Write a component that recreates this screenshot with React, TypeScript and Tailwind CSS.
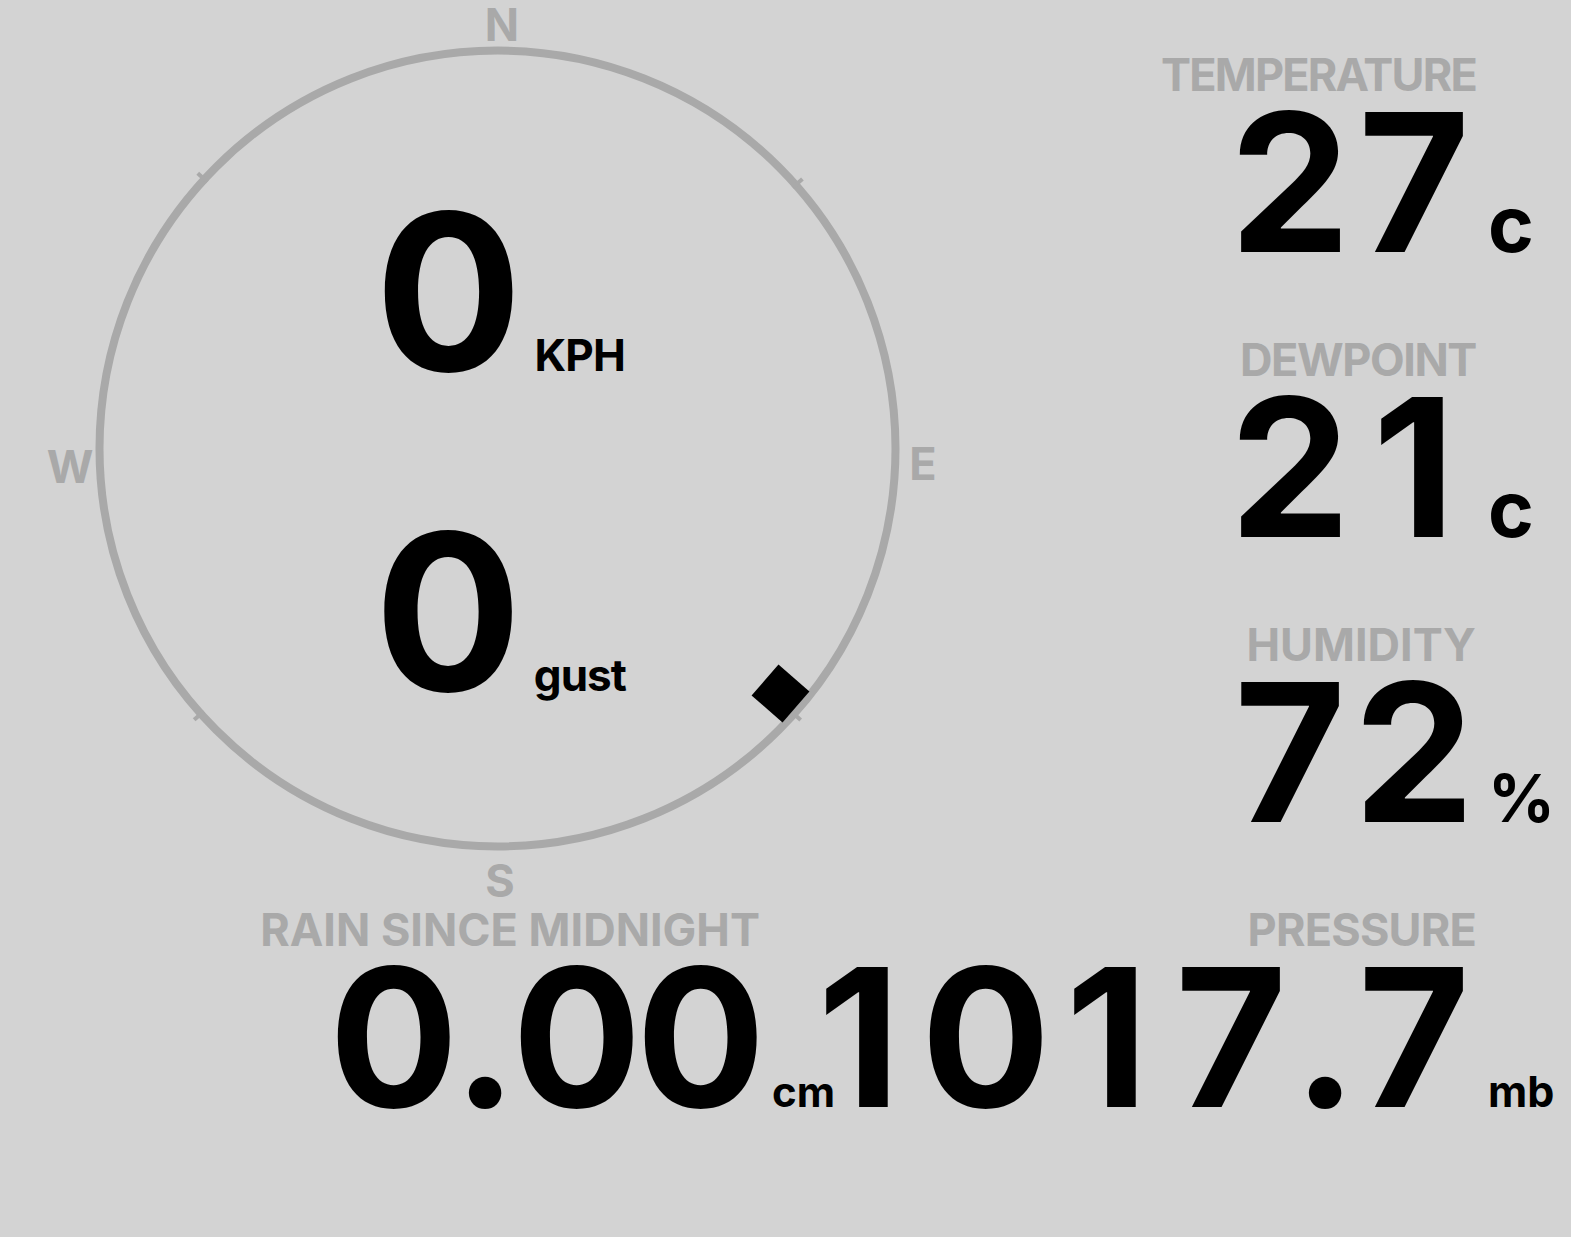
import React from 'react';

const LABEL = 'text-[45px] leading-none font-bold text-[#a9a9a9]';
const BIG = 'text-[192px] leading-none font-bold text-black whitespace-nowrap';

// each glyph sits in a fixed cell so the digits line up like a tabular face
const Digits = ({ value }: { value: string }) => (
  <span className={BIG}>
    {value.split('').map((ch, i) => (
      <span
        key={i}
        className={ch === '.' ? 'inline-block w-[59px] text-center' : 'inline-block w-[124px] text-center'}
      >
        {ch}
      </span>
    ))}
  </span>
);

type StatProps = {
  label: string;
  value: string;
  unit: string;
  col: string;
  unitClass: string;
  track?: string;
};

const Stat = ({ label, value, unit, col, unitClass, track = '' }: StatProps) => (
  <div className="flex flex-col">
    <div className={`${col} shrink-0 text-right ${LABEL} ${track}`}>{label}</div>
    <div className="-mt-[11px] flex items-baseline">
      <div className={`${col} flex shrink-0 justify-end`}>
        <Digits value={value} />
      </div>
      <span className={`pl-3 leading-none font-bold text-black ${unitClass}`}>
        {unit}
      </span>
    </div>
  </div>
);

const Compass = () => {
  // wind direction in degrees, clockwise from north
  const dir = 131;
  const cx = 497.5;
  const cy = 448.5;
  const ticks = [
    [302, -267],
    [-294, -270],
    [-294, 263],
    [297, 266],
  ];

  return (
    <div className="relative flex h-[900px] w-[1000px] shrink-0 flex-col items-center pt-[182px]">
      <svg
        className="absolute inset-0 h-full w-full"
        viewBox="0 0 1000 900"
        fill="none"
      >
        <circle cx={cx} cy={cy} r={398} stroke="#a9a9a9" strokeWidth={8} />
        {ticks.map(([dx, dy], i) => {
          const len = Math.hypot(dx, dy);
          const ux = dx / len;
          const uy = dy / len;
          return (
            <line
              key={i}
              x1={cx + ux * 394}
              y1={cy + uy * 394}
              x2={cx + ux * 407}
              y2={cy + uy * 407}
              stroke="#a9a9a9"
              strokeWidth={4}
            />
          );
        })}
      </svg>

      <span className={`absolute top-[24px] left-[502px] -translate-x-1/2 -translate-y-1/2 ${LABEL}`}>
        N
      </span>
      <span className={`absolute top-[463px] left-[923px] -translate-x-1/2 -translate-y-1/2 ${LABEL}`}>
        E
      </span>
      <span className={`absolute top-[880px] left-[500px] -translate-x-1/2 -translate-y-1/2 ${LABEL}`}>
        S
      </span>
      <span className={`absolute top-[466px] left-[70px] -translate-x-1/2 -translate-y-1/2 ${LABEL}`}>
        W
      </span>

      {/* direction marker */}
      <div
        className="absolute top-[673px] left-[760px] h-[41px] w-[41px] bg-black"
        style={{ transform: `rotate(${dir}deg)` }}
      />

      <div className="relative flex items-baseline">
        <span className="text-[219px] leading-none font-bold">0</span>
        <span className="ml-3 text-[44px] leading-none font-bold tracking-[-0.8px]">KPH</span>
      </div>
      <div className="relative mt-[101px] flex items-baseline">
        <span className="text-[219px] leading-none font-bold">0</span>
        <span className="ml-3 text-[44px] leading-none font-bold tracking-[-1px]">gust</span>
      </div>
    </div>
  );
};

export default function App() {
  return (
    <div className="h-[1237px] w-[1571px] overflow-hidden bg-[#d3d3d3] font-[Inter,sans-serif] text-black">
      <div className="flex h-[900px]">
        <Compass />
        <div className="flex w-[571px] flex-col pt-[52px]">
          <div className="h-[285px]">
            <Stat label="TEMPERATURE" value="27" unit="c" col="w-[476px]" unitClass="text-[78px]" track="tracking-[-1.8px]" />
          </div>
          <div className="h-[285px]">
            <Stat label="DEWPOINT" value="21" unit="c" col="w-[476px]" unitClass="text-[78px]" track="tracking-[-1.4px]" />
          </div>
          <div>
            <Stat label="HUMIDITY" value="72" unit="%" col="w-[476px]" unitClass="text-[66px]" />
          </div>
        </div>
      </div>

      <div className="flex pt-[7px]">
        <div className="w-[1000px] shrink-0">
          <Stat label="RAIN SINCE MIDNIGHT" value="0.00" unit="cm" col="w-[760px]" unitClass="text-[42px]" />
        </div>
        <div className="w-[571px]">
          <Stat label="PRESSURE" value="1017.7" unit="mb" col="w-[476px]" unitClass="text-[43px]" track="tracking-[-0.8px]" />
        </div>
      </div>
    </div>
  );
}
